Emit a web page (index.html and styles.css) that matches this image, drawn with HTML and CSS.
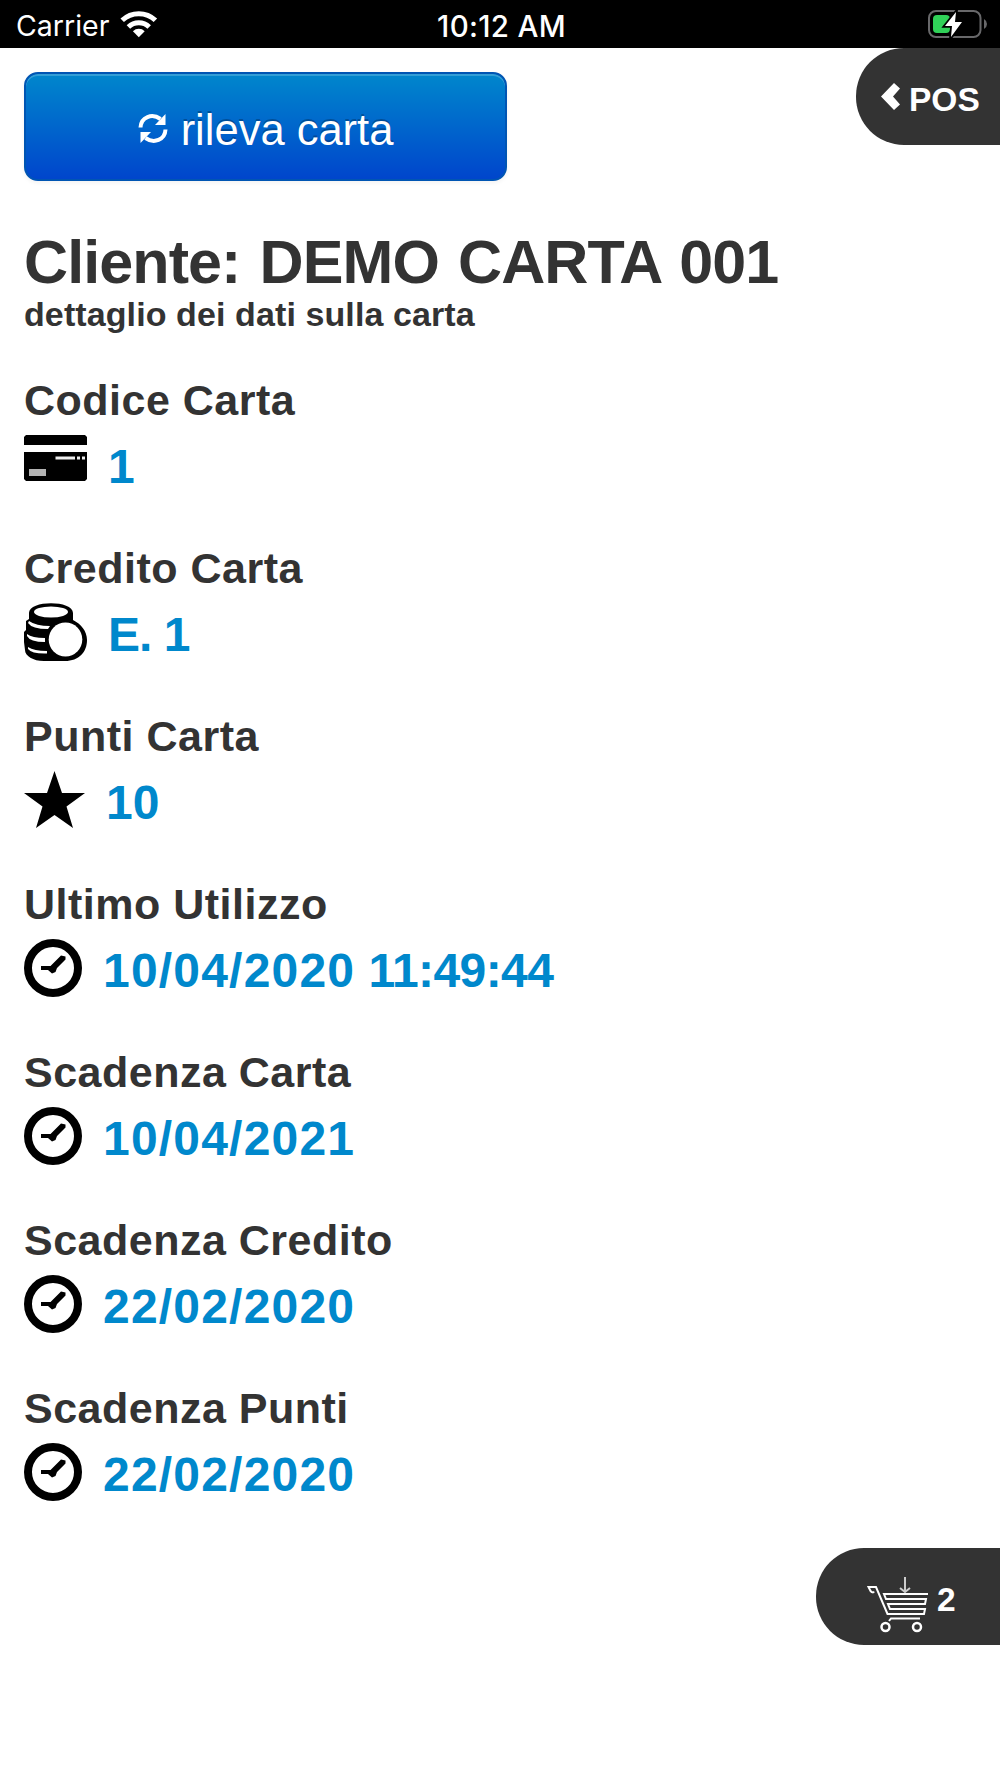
FILE: index.html
```html
<!DOCTYPE html>
<html lang="it">
<head>
  <meta charset="UTF-8" />
  <meta name="viewport" content="width=device-width, initial-scale=1.0" />
  <title>Dettaglio carta</title>
  <link rel="stylesheet" href="styles.css">
</head>
<body>
  <div class="statusbar">
    <div class="carrier">
      <span>Carrier</span>
      <svg width="38" height="28" viewBox="0 0 38 28" fill="none" stroke="#fff" stroke-width="5">
        <path d="M2.2 10.3a24 24 0 0 1 33.2 0" />
        <path d="M8.4 17a15 15 0 0 1 20.8 0" />
        <path d="M18.8 27.2l-5.900-6a8.600 8.600 0 0 1 11.800 0z" fill="#fff" stroke="none" />
      </svg>
    </div>
    <div class="time">10:12 AM</div>
    <svg class="battery" width="60" height="32" viewBox="0 0 60 32">
      <rect x="2" y="3" width="51.5" height="26" rx="7" fill="none" stroke="#68686a" stroke-width="2" />
      <path d="M57 11q3 1.800 3 5t-3 5z" fill="#68686a" />
      <rect x="6" y="7" width="17" height="18" rx="4" fill="#30d158" />
      <path d="M29 4L18 18h7l-1 11L35 14h-7z" fill="#fff" stroke="#000" stroke-width="3.500" paint-order="stroke" />
    </svg>
  </div>

  <a class="pill pos">
    <svg width="20" height="29" viewBox="0 0 20 29"><path d="M13 1l6 5.500-7 8 7 8-6 5.500L0 14.500z" fill="#fff" /></svg>
    <span>POS</span>
  </a>

  <div class="content">
    <button class="btn">
      <svg width="30" height="31" viewBox="0 0 30 31">
        <path d="M2.500 14.500C3 4 14 0 22.500 6" fill="none" stroke="#fff" stroke-width="4" />
        <path d="M27.500 1v11H17z" fill="#fff" />
        <path d="M27.500 16.500C27 27 16 31 7.500 25" fill="none" stroke="#fff" stroke-width="4" />
        <path d="M2.500 30V19H13z" fill="#fff" />
      </svg>
      <span>rileva carta</span>
    </button>

    <h1>Cliente: DEMO CARTA 001</h1>
    <h5>dettaglio dei dati sulla carta</h5>

    <div class="field">
      <h4>Codice Carta</h4>
      <div class="value">
        <svg class="card" width="63" height="46" viewBox="0 0 63 46">
          <path d="M2 0h59l2 2v8H0V2z" />
          <path d="M0 17h63v27l-2 2H2l-2-2z" />
          <path d="M31.500 21.500h19.500v3H31.500zM53 21.500h3v3h-3zM58 21.500h3v3h-3z" fill="#eee" />
          <path d="M5 34h17v7H5z" fill="#b3b3b3" />
        </svg>
        <span>1</span>
      </div>
    </div>

    <div class="field">
      <h4>Credito Carta</h4>
      <div class="value">
        <svg width="63" height="58" viewBox="0 0 63 58">
          <path d="M5 10C5-3 49-3 49 10v7c8 4 14 11 14 20 0 12-8 21-22 21H20C9 58 1 53 1 47l-1-8V29l2-2v-9l3-2z" />
          <ellipse cx="27" cy="9" rx="17" ry="5.500" fill="#fff" />
          <path d="M5 18q7 5 21 5l-2 3Q8 26 4 20zM3 31q5 4 18 4v4Q6 39 3 33zM4 44q6 4 19 4v2.500Q8 51 4 46z" fill="#fff" />
          <ellipse cx="41.500" cy="36.500" rx="16.800" ry="17" fill="#fff" />
        </svg>
        <span class="credit">E. 1</span>
      </div>
    </div>

    <div class="field">
      <h4>Punti Carta</h4>
      <div class="value">
        <svg width="61" height="58" viewBox="0 0 61 58">
          <path d="M30.500 0l7.500 22h23L42.500 35.500 49 57 30.500 44 12 57l6.500-21.500L0 22h23z" />
        </svg>
        <span>10</span>
      </div>
    </div>

    <div class="field">
      <h4>Ultimo Utilizzo</h4>
      <div class="value">
        <svg width="58" height="58" viewBox="0 0 58 58">
          <circle cx="29" cy="29" r="25" fill="none" stroke="#000" stroke-width="8" />
          <path d="M17 27h9.500L37 16.500l4.500 1v3L33 29l-1.500 4-3.500 1.500-4-3.500h-7z" />
        </svg>
        <span><span class="date">10/04/2020</span> <span class="hour">11:49:44</span></span>
      </div>
    </div>

    <div class="field">
      <h4>Scadenza Carta</h4>
      <div class="value">
        <svg width="58" height="58" viewBox="0 0 58 58">
          <circle cx="29" cy="29" r="25" fill="none" stroke="#000" stroke-width="8" />
          <path d="M17 27h9.500L37 16.500l4.500 1v3L33 29l-1.500 4-3.500 1.500-4-3.500h-7z" />
        </svg>
        <span class="date">10/04/2021</span>
      </div>
    </div>

    <div class="field">
      <h4>Scadenza Credito</h4>
      <div class="value">
        <svg width="58" height="58" viewBox="0 0 58 58">
          <circle cx="29" cy="29" r="25" fill="none" stroke="#000" stroke-width="8" />
          <path d="M17 27h9.500L37 16.500l4.500 1v3L33 29l-1.500 4-3.500 1.500-4-3.500h-7z" />
        </svg>
        <span class="date">22/02/2020</span>
      </div>
    </div>

    <div class="field">
      <h4>Scadenza Punti</h4>
      <div class="value">
        <svg width="58" height="58" viewBox="0 0 58 58">
          <circle cx="29" cy="29" r="25" fill="none" stroke="#000" stroke-width="8" />
          <path d="M17 27h9.500L37 16.500l4.500 1v3L33 29l-1.500 4-3.500 1.500-4-3.500h-7z" />
        </svg>
        <span class="date">22/02/2020</span>
      </div>
    </div>
  </div>

  <a class="pill cart">
    <svg width="62" height="58" viewBox="0 0 62 58" fill="none" stroke="#fff" stroke-width="2">
      <path d="M38 2v15M33 13l5 4 5-4" stroke="#ccc" />
      <path d="M7 16.500q-1 2-3.500-.500L1.500 12H9l11.500 27H57l1-5H23l-2-5h37l1-5H19l-2-5h44" />
      <path d="M22 46l2-2.500h29" />
      <circle cx="18.500" cy="52" r="4" stroke-width="2.500" />
      <circle cx="50" cy="52" r="4" stroke-width="2.500" />
    </svg>
    <span>2</span>
  </a>
</body>
</html>
```
FILE: styles.css
```css
body {
  margin: 0;
  min-height: 1778px;
  background: #fff;
  color: #333;
  font-family: "Liberation Sans", Arial, sans-serif;
}
svg {
  display: block;
  flex: none;
}
.statusbar {
  display: grid;
  grid-template-columns: 1fr auto 1fr;
  align-items: center;
  box-sizing: border-box;
  height: 48px;
  padding: 0 13px 0 16px;
  background: #000;
  color: #fff;
  font-family: Inter, sans-serif;
  font-size: 28.5px;
}
.carrier {
  display: flex;
  align-items: center;
  gap: 11px;
}
.carrier span {
  padding-top: 3px;
}
.time {
  padding-top: 3px;
  font-size: 29.5px;
  font-weight: 500;
  letter-spacing: 0.3px;
}
.battery {
  justify-self: end;
}
.pill {
  position: absolute;
  right: 0;
  display: flex;
  align-items: center;
  box-sizing: border-box;
  height: 97px;
  border-radius: 48px 0 0 48px;
  background: #333;
  color: #fff;
  font-size: 33.5px;
  font-weight: bold;
}
.pos {
  top: 48px;
  width: 144px;
  padding-left: 25px;
  gap: 8px;
}
.pos span {
  padding-top: 6px;
}
.cart {
  top: 1548px;
  width: 184px;
  padding-left: 51px;
  gap: 8px;
}
.cart svg {
  padding-top: 15px;
}
.cart span {
  padding-top: 7px;
}
.content {
  padding: 24px 24px 0;
}
.btn {
  display: flex;
  align-items: center;
  justify-content: center;
  gap: 13px;
  width: 483px;
  height: 109px;
  padding: 0;
  border: 2px solid #0055b3;
  border-radius: 14px;
  background: linear-gradient(to bottom, #0088cc, #0044cc) border-box;
  box-shadow: inset 0 2px 0 rgba(255, 255, 255, 0.2), 0 2px 4px rgba(0, 0, 0, 0.05);
  color: #fff;
  font-family: inherit;
  font-size: 43.5px;
  text-shadow: 0 -2px 0 rgba(0, 0, 0, 0.25);
}
.btn svg {
  margin-top: 3px;
}
.btn span {
  padding-top: 7px;
}
h1 {
  margin: 46px 0 0;
  font-size: 61px;
  line-height: 70px;
  letter-spacing: -0.9px;
  word-spacing: 3px;
}
h5 {
  margin: -1px 0 0;
  font-size: 34px;
  line-height: 36px;
  letter-spacing: 0.1px;
}
.field {
  height: 168px;
}
h5 + .field {
  margin-top: 44px;
}
h4 {
  margin: 0;
  font-size: 43px;
  line-height: 48px;
  letter-spacing: 0.5px;
}
.value {
  display: flex;
  align-items: center;
  gap: 21px;
  height: 58px;
  margin-top: 11px;
  color: #0088cc;
  font-size: 48px;
  font-weight: bold;
}
.value > span {
  padding-top: 4px;
}
.card {
  margin-bottom: 12px;
}
.credit {
  letter-spacing: -1px;
}
.date {
  letter-spacing: 1.2px;
}
.hour {
  letter-spacing: -0.6px;
}
```
